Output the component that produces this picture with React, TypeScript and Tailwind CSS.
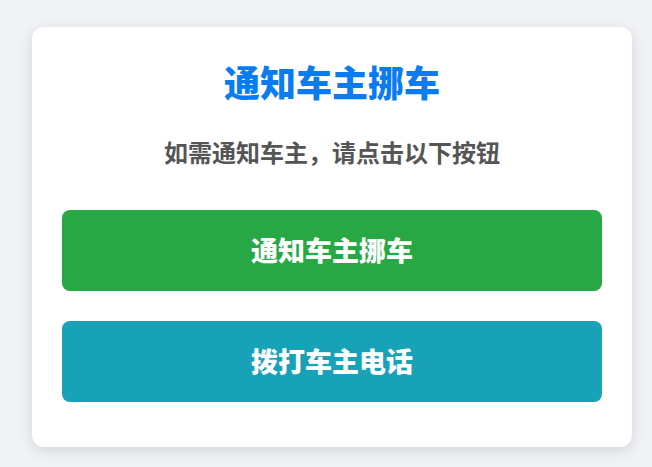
export default function App() {
    return (
        <div className="min-h-[467px] bg-[#f0f2f5] pt-[27px] pl-[32px] pr-[20px] font-['Noto_Sans_CJK_SC',sans-serif]">
            <div className="w-[600px] rounded-[12px] bg-white px-[30px] pt-[30px] pb-[45px] shadow-[0_4px_14px_rgba(0,0,0,0.12)]">
                {/* Header */}
                <h1 className="text-center text-[36px] leading-[48px] font-black text-[#0a7cf2]">通知车主挪车</h1>
                <p className="mt-[31px] text-center text-[24px] leading-[32px] font-bold text-[#555555]">
                    如需通知车主，请点击以下按钮
                </p>

                {/* Actions */}
                <div className="mt-[42px] flex flex-col gap-[30px]">
                    <button className="h-[81px] w-full rounded-[8px] bg-[#28a745] text-[27px] font-black text-white">
                        通知车主挪车
                    </button>
                    <button className="h-[81px] w-full rounded-[8px] bg-[#17a2b8] text-[27px] font-black text-white">
                        拨打车主电话
                    </button>
                </div>
            </div>
        </div>
    );
}
